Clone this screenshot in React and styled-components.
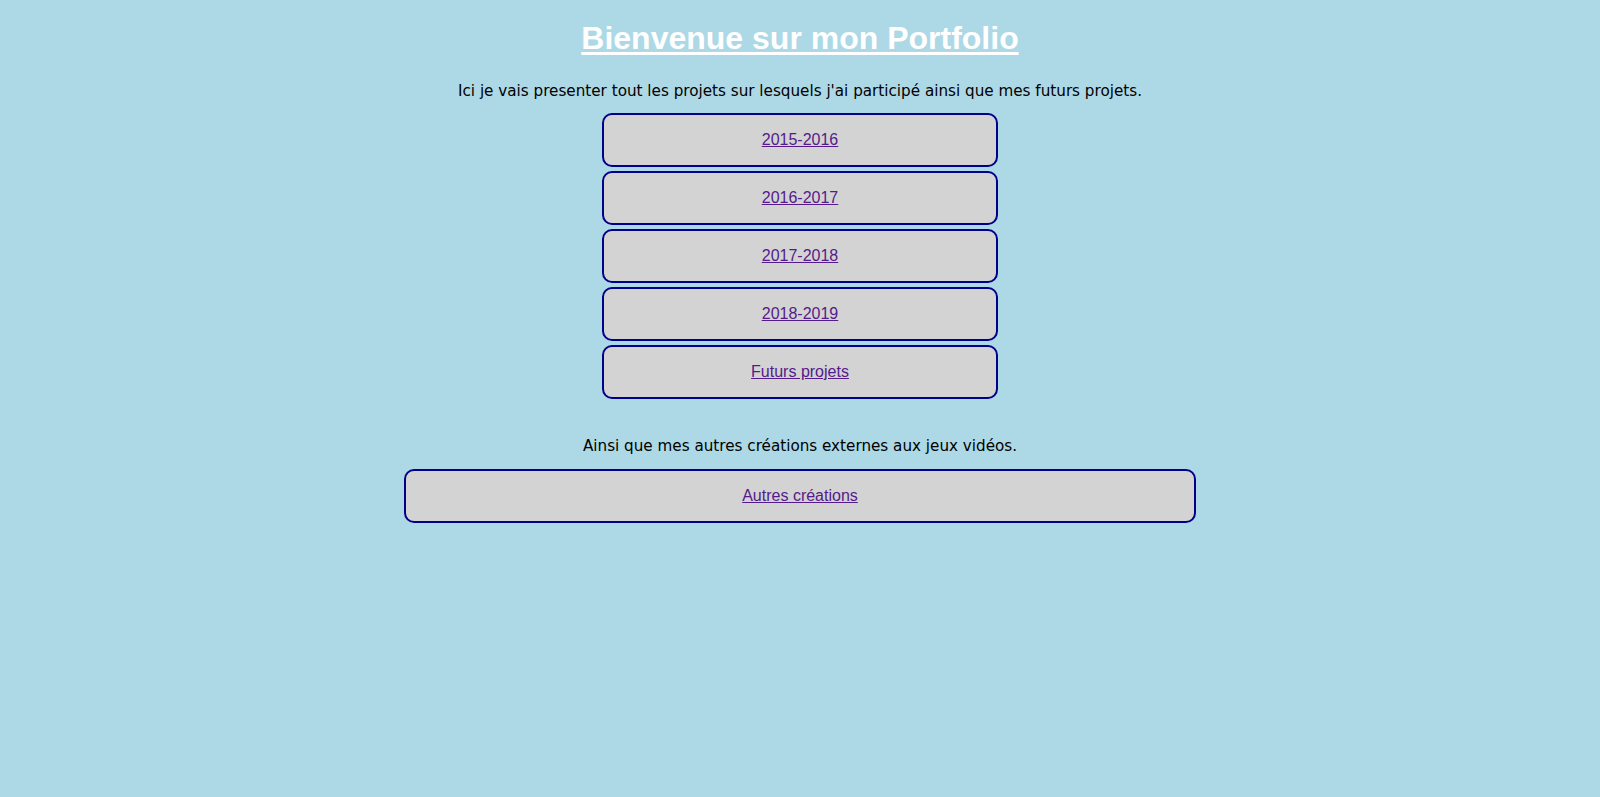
import React from "react";
import styled, { createGlobalStyle } from "styled-components";

const GlobalStyle = createGlobalStyle`
  html, body {
    margin: 0;
    padding: 0;
    background: #add8e6;
  }
  body {
    font-family: "DejaVu Sans", Verdana, sans-serif;
    color: #000;
  }
`;

const Page = styled.main`
  min-height: 797px;
  box-sizing: border-box;
  padding: 20px 8px 0;
  display: flex;
  flex-direction: column;
  align-items: center;
  text-align: center;
`;

const Title = styled.h1`
  margin: 0;
  font-family: "Liberation Sans", Arial, sans-serif;
  font-size: 32px;
  line-height: 36px;
  font-weight: 700;
  color: #ffffff;
  text-decoration: underline;
  text-decoration-thickness: 3px;
  text-underline-offset: 3px;
`;

const Text = styled.p`
  margin: ${(p) => p.$top}px 0 0;
  font-size: 15.2px;
  line-height: 18px;
`;

const Links = styled.nav`
  margin-top: ${(p) => p.$top}px;
  display: flex;
  flex-direction: column;
  align-items: center;
  gap: 4px;
`;

const Card = styled.div`
  box-sizing: border-box;
  width: ${(p) => p.$width}px;
  height: 54px;
  padding-top: 16px;
  background: #d3d3d3;
  border: 2px solid #00008b;
  border-radius: 10px;
  font-family: "Liberation Sans", Arial, sans-serif;
  font-size: 16px;
  line-height: 18px;
`;

const Link = styled.a`
  color: #551a8b;
  text-decoration: underline;
`;

const years = ["2015-2016", "2016-2017", "2017-2018", "2018-2019", "Futurs projets"];

export default function App() {
  return (
    <>
      <GlobalStyle />
      <Page>
        <Title>Bienvenue sur mon Portfolio</Title>
        <Text $top={26}>
          Ici je vais presenter tout les projets sur lesquels j'ai participé ainsi que mes futurs projets.
        </Text>
        <Links $top={13}>
          {years.map((y) => (
            <Card key={y} $width={396}>
              <Link href="#">{y}</Link>
            </Card>
          ))}
        </Links>
        <Text $top={38}>Ainsi que mes autres créations externes aux jeux vidéos.</Text>
        <Links $top={14}>
          <Card $width={792}>
            <Link href="#">Autres créations</Link>
          </Card>
        </Links>
      </Page>
    </>
  );
}
